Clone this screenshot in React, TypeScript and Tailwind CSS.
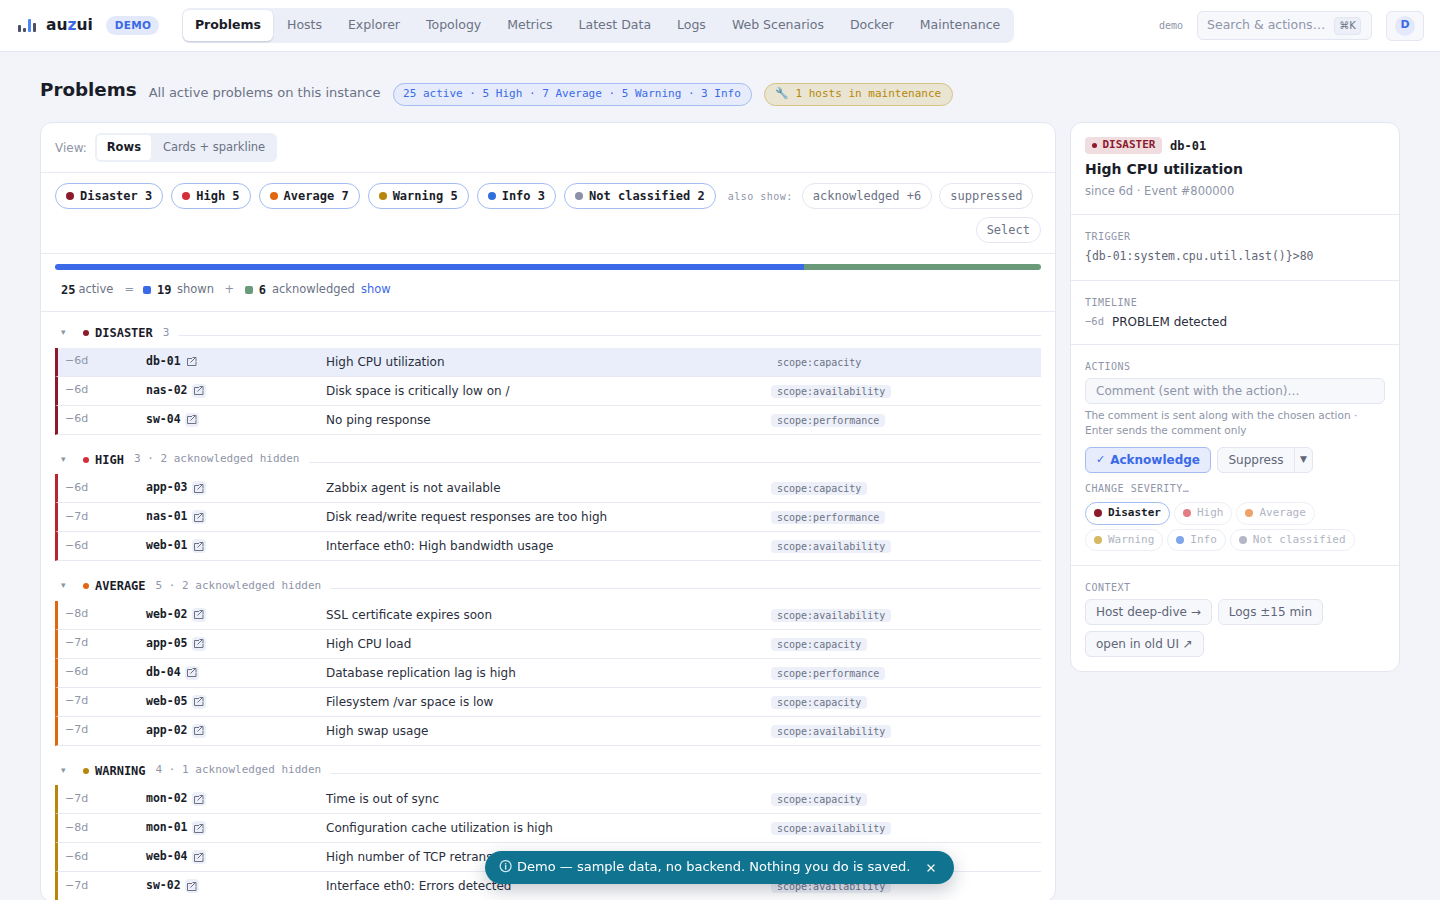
import { X } from "lucide-react";

const mono = "[font-family:'DejaVu_Sans_Mono',monospace]";

const navItems = ["Hosts", "Explorer", "Topology", "Metrics", "Latest Data", "Logs", "Web Scenarios", "Docker", "Maintenance"];

const filters = [
  { label: "Disaster 3", color: "bg-[#8b1a2b]" },
  { label: "High 5", color: "bg-[#d32f3a]" },
  { label: "Average 7", color: "bg-[#e0660f]" },
  { label: "Warning 5", color: "bg-[#b8860b]" },
  { label: "Info 3", color: "bg-[#2f6fdc]" },
  { label: "Not classified 2", color: "bg-[#8a90a6]" },
];

const groups = [
  {
    name: "DISASTER",
    note: "3",
    dot: "bg-[#8b1a2b]",
    bar: "border-l-[#8b1a2b]",
    rows: [
      ["−6d", "db-01", "High CPU utilization", "scope:capacity"],
      ["−6d", "nas-02", "Disk space is critically low on /", "scope:availability"],
      ["−6d", "sw-04", "No ping response", "scope:performance"],
    ],
  },
  {
    name: "HIGH",
    note: "3 · 2 acknowledged hidden",
    dot: "bg-[#d32f3a]",
    bar: "border-l-[#b9252f]",
    rows: [
      ["−6d", "app-03", "Zabbix agent is not available", "scope:capacity"],
      ["−7d", "nas-01", "Disk read/write request responses are too high", "scope:performance"],
      ["−6d", "web-01", "Interface eth0: High bandwidth usage", "scope:availability"],
    ],
  },
  {
    name: "AVERAGE",
    note: "5 · 2 acknowledged hidden",
    dot: "bg-[#e0660f]",
    bar: "border-l-[#e0660f]",
    rows: [
      ["−8d", "web-02", "SSL certificate expires soon", "scope:availability"],
      ["−7d", "app-05", "High CPU load", "scope:capacity"],
      ["−6d", "db-04", "Database replication lag is high", "scope:performance"],
      ["−7d", "web-05", "Filesystem /var space is low", "scope:capacity"],
      ["−7d", "app-02", "High swap usage", "scope:availability"],
    ],
  },
  {
    name: "WARNING",
    note: "4 · 1 acknowledged hidden",
    dot: "bg-[#b8860b]",
    bar: "border-l-[#b8860b]",
    rows: [
      ["−7d", "mon-02", "Time is out of sync", "scope:capacity"],
      ["−8d", "mon-01", "Configuration cache utilization is high", "scope:availability"],
      ["−6d", "web-04", "High number of TCP retransmissions", "scope:capacity"],
      ["−7d", "sw-02", "Interface eth0: Errors detected", "scope:availability"],
    ],
  },
];

const severities = [
  { label: "Disaster", color: "bg-[#8b1a2b]", on: true },
  { label: "High", color: "bg-[#e27c84]" },
  { label: "Average", color: "bg-[#eca368]" },
  { label: "Warning", color: "bg-[#d6b962]" },
  { label: "Info", color: "bg-[#7ea6e8]" },
  { label: "Not classified", color: "bg-[#b4b8c6]" },
];

function ExternalIcon() {
  return (
    <svg width="10" height="9" viewBox="0 0 10 9" fill="none" stroke="#6b7285" strokeWidth="1">
      <path d="M9 4.5v4H.5v-7h4.5" />
      <path d="M3.5 5.5 8 1M5.5.5h3.5V4" />
    </svg>
  );
}

function Logo() {
  return (
    <svg width="18" height="13" viewBox="0 0 18 13" className="shrink-0">
      <rect x="0" y="6" width="3" height="7" rx="1" fill="#4a5068" />
      <rect x="5" y="9" width="3" height="4" rx="1" fill="#4a5068" />
      <rect x="10" y="0" width="3" height="13" rx="1" fill="#4f86f7" />
      <rect x="15" y="4" width="3" height="9" rx="1" fill="#4a5068" />
    </svg>
  );
}

function Header() {
  return (
    <header className="h-[52px] shrink-0 bg-white border-b border-[#e3e6f0] flex items-center pl-[18px] pr-4">
      <Logo />
      <span className="ml-[10px] text-[15.5px] font-bold text-[#1a1d29]">
        au<span className="text-[#3b6ae8]">z</span>ui
      </span>
      <span className="ml-[13.5px] h-[19px] w-[53px] rounded-full bg-[#e3e9fb] text-[#3b6ae8] text-[10.5px] font-bold flex items-center justify-center tracking-[0.3px]">
        DEMO
      </span>
      <nav className="ml-[22.5px] h-[35px] w-[832px] bg-[#eceff7] rounded-lg flex items-center gap-0.5 px-px">
        <span className="h-[31px] px-3 rounded-md bg-white shadow-[0_1px_2px_rgba(30,40,80,0.2)] text-[12.5px] font-bold text-[#1a1d29] flex items-center">
          Problems
        </span>
        {navItems.map((n) => (
          <span key={n} className="px-3 text-[12.5px] text-[#6b7285] whitespace-nowrap">
            {n}
          </span>
        ))}
      </nav>
      <span className={`ml-auto ${mono} text-[10px] text-[#8f95a8]`}>demo</span>
      <div className="ml-[14px] w-[175px] h-[29px] rounded-md bg-[#f7f8fc] border border-[#e3e6f0] flex items-center justify-between pl-[9px] pr-[10px]">
        <span className="text-[12.5px] text-[#8f95a8] whitespace-nowrap">Search &amp; actions…</span>
        <span className="h-[18px] w-[27px] rounded bg-[#eceff7] border border-[#e3e6f0] text-[10px] text-[#6b7285] flex items-center justify-center">
          ⌘K
        </span>
      </div>
      <div className="ml-[14px] w-[38px] h-[30px] rounded-md bg-[#f7f8fc] border border-[#e3e6f0] flex items-center justify-center">
        <span className="w-5 h-5 rounded-full bg-[#e3e9fb] text-[#3b6ae8] text-[11px] font-bold flex items-center justify-center">
          D
        </span>
      </div>
    </header>
  );
}

function ProblemRow({ row, bar, selected }: { row: string[]; bar: string; selected: boolean }) {
  return (
    <div
      className={`h-[29px] border-l-[3px] ${bar} border-b border-b-[#e8eaf3] pl-2 grid grid-cols-[80px_180px_445px_1fr] items-center ${
        selected ? "bg-[#e9eefa]" : "bg-white"
      }`}
    >
      <span className="text-[11px] text-[#8f95a8] -ml-px">{row[0]}</span>
      <span className="flex items-center gap-[4px]">
        <span className={`${mono} text-[11.5px] font-bold text-[#1a1d29]`}>{row[1]}</span>
        <span className={`w-[14px] h-[14px] rounded flex items-center justify-center ${selected ? "" : "bg-[#eceff7]"}`}>
          <ExternalIcon />
        </span>
      </span>
      <span className="text-[12px] text-[#2a2e3c]">{row[2]}</span>
      <span className="-mt-[2px]">
        <span className={`${mono} inline-flex items-center h-[13px] px-[6px] rounded text-[10px] text-[#6b7285] ${selected ? "" : "bg-[#edf0f8]"}`}>
          {row[3]}
        </span>
      </span>
    </div>
  );
}

function ProblemList() {
  return (
    <section className="w-[1016px] shrink-0 bg-white border border-[#e3e6f0] rounded-xl overflow-hidden">
      <div className="h-[50px] border-b border-[#e8eaf3] px-[14px] flex items-center gap-2">
        <span className="text-[12px] text-[#8f95a8]">View:</span>
        <div className="h-[29px] w-[182px] rounded-md bg-[#eceff7] flex items-center p-0.5">
          <span className="h-[25px] w-[54px] rounded bg-white text-[11.5px] font-bold text-[#1a1d29] flex items-center justify-center">
            Rows
          </span>
          <span className="ml-3 text-[11.5px] text-[#6b7285]">Cards + sparkline</span>
        </div>
      </div>

      <div className="h-[81px] border-b border-[#e8eaf3] px-[14px] pt-[10px] flex flex-wrap gap-x-2 gap-y-2 content-start items-center">
        {filters.map((f) => (
          <span
            key={f.label}
            className={`${mono} h-[26px] px-[10px] rounded-full border border-[#a3bcf2] text-[12px] font-bold text-[#1a1d29] flex items-center gap-[6px]`}
          >
            <span className={`w-2 h-2 rounded-full ${f.color}`} />
            {f.label}
          </span>
        ))}
        <span className={`${mono} ml-1 mr-px text-[10px] tracking-[0.5px] text-[#8f95a8]`}>also show:</span>
        <span className={`${mono} h-[26px] px-[10px] rounded-full border border-[#e3e6f0] text-[12px] text-[#6b7285] flex items-center`}>
          acknowledged +6
        </span>
        <span className={`${mono} -ml-px h-[26px] px-[10px] rounded-full border border-[#e3e6f0] text-[12px] text-[#6b7285] flex items-center`}>
          suppressed
        </span>
        <span className={`${mono} ml-auto h-[26px] px-[10px] rounded-full border border-[#e3e6f0] text-[12px] text-[#6b7285] flex items-center`}>
          Select
        </span>
      </div>

      <div className="h-[58px] border-b border-[#e8eaf3] px-[14px] pt-[10px]">
        <div className="h-1.5 rounded-full overflow-hidden flex">
          <div className="w-[749px] bg-[#3b6ae8]" />
          <div className="flex-1 bg-[#6b9a7b]" />
        </div>
        <div className="mt-[10.5px] pl-[6px] flex items-center text-[11.5px] text-[#6b7285]">
          <span className={`${mono} text-[12px] font-bold text-[#1a1d29]`}>25</span>
          <span className="ml-[3px]">active</span>
          <span className="ml-[11px] text-[#8f95a8]">=</span>
          <span className="ml-[9px] w-2 h-2 rounded-[2px] bg-[#3b6ae8]" />
          <span className={`${mono} ml-[6px] text-[12px] font-bold text-[#1a1d29]`}>19</span>
          <span className="ml-[5.5px]">shown</span>
          <span className="ml-[10.5px] text-[#8f95a8]">+</span>
          <span className="ml-[10.5px] w-2 h-2 rounded-[2px] bg-[#6b9a7b]" />
          <span className={`${mono} ml-[6px] text-[12px] font-bold text-[#1a1d29]`}>6</span>
          <span className="ml-[6px]">acknowledged</span>
          <span className="ml-[6px] text-[#3b6ae8]">show</span>
        </div>
      </div>

      <div className="px-[14px] pt-[13px]">
        {groups.map((g, gi) => (
          <div key={g.name}>
            <div className={`h-4 flex items-center ${gi > 0 ? "mt-[17px] mb-[6.5px]" : "mb-[6.6px]"}`}>
              <span className="w-[28px] pl-[6px] text-[9px] text-[#8f95a8]">▾</span>
              <span className={`w-[6px] h-[6px] rounded-full ${g.dot}`} />
              <span className={`${mono} ml-[6px] text-[12px] font-bold text-[#1a1d29]`}>{g.name}</span>
              <span className={`${mono} ml-[10px] text-[11px] text-[#8f95a8]`}>{g.note}</span>
              <span className="ml-[10px] flex-1 h-px mt-[5px] bg-[#e8eaf3]" />
            </div>
            {g.rows.map((r) => (
              <ProblemRow key={r[1]} row={r} bar={g.bar} selected={r[1] === "db-01"} />
            ))}
          </div>
        ))}
      </div>
    </section>
  );
}

function Label({ children }: { children: string }) {
  return <div className={`${mono} text-[10px] tracking-[0.5px] leading-[14px] text-[#8f95a8]`}>{children}</div>;
}

function DetailPanel() {
  return (
    <aside className="w-[330px] h-[550px] shrink-0 bg-white border border-[#e3e6f0] rounded-xl overflow-hidden">
      <div className="h-[92px] border-b border-[#e8eaf3] px-[14px] pt-[13.5px]">
        <div className="flex items-center gap-2">
          <span className={`${mono} h-[17px] w-[77px] rounded bg-[#f0dde0] text-[#8b1a2b] text-[11px] font-bold flex items-center justify-center gap-[6px]`}>
            <span className="w-[5px] h-[5px] rounded-full bg-[#8b1a2b]" />
            DISASTER
          </span>
          <span className={`${mono} text-[12px] font-bold text-[#1a1d29]`}>db-01</span>
        </div>
        <div className="mt-[4.5px] text-[14px] leading-[20px] font-bold text-[#1a1d29]">High CPU utilization</div>
        <div className="mt-[4px] text-[11.5px] leading-[16px] text-[#8f95a8]">since 6d · Event #800000</div>
      </div>

      <div className="h-[66px] border-b border-[#e8eaf3] px-[14px] pt-[15px]">
        <Label>TRIGGER</Label>
        <div className={`${mono} mt-1 text-[11.5px] leading-[16px] text-[#5f6678]`}>
          {"{db-01:system.cpu.util.last()}>80"}
        </div>
      </div>

      <div className="h-[64px] border-b border-[#e8eaf3] px-[14px] pt-[15px]">
        <Label>TIMELINE</Label>
        <div className="mt-1 flex items-center gap-2">
          <span className={`${mono} text-[10.5px] text-[#8f95a8]`}>−6d</span>
          <span className="text-[12px] leading-[16px] text-[#2a2e3c]">PROBLEM detected</span>
        </div>
      </div>

      <div className="h-[221px] border-b border-[#e8eaf3] px-[14px] pt-[15px]">
        <Label>ACTIONS</Label>
        <div className="mt-[4px] h-[26px] rounded-md bg-[#f7f8fc] border border-[#e3e6f0] flex items-center px-[10px] text-[12px] text-[#8f95a8]">
          Comment (sent with the action)…
        </div>
        <p className="mt-[4px] text-[10.5px] leading-[15px] text-[#8f95a8]">
          The comment is sent along with the chosen action · Enter sends the comment only
        </p>
        <div className="mt-[9px] flex gap-[6px]">
          <span className="h-[26px] w-[126px] rounded-md bg-[#e6ecfb] border border-[#a3bcf2] text-[#3b6ae8] text-[12px] font-bold flex items-center justify-center gap-[5px]">
            <span className="text-[11px] font-normal">✓</span>Acknowledge
          </span>
          <span className="h-[26px] w-[96px] rounded-md bg-[#f7f8fc] border border-[#e3e6f0] flex items-center text-[#5f6678]">
            <span className="w-[76px] text-center text-[12px]">Suppress</span>
            <span className="flex-1 h-full border-l border-[#e3e6f0] flex items-center justify-center text-[9px]">▼</span>
          </span>
        </div>
        <div className="mt-[9px]">
          <Label>CHANGE SEVERITY…</Label>
        </div>
        <div className="mt-[6px] flex flex-wrap gap-x-1 gap-y-1">
          {severities.map((s) => (
            <span
              key={s.label}
              className={`${mono} h-[22.5px] px-2 rounded-full border text-[11px] flex items-center gap-[6px] ${
                s.on ? "border-[#a3bcf2] font-bold text-[#1a1d29]" : "border-[#eceef5] text-[#b0b4c3]"
              }`}
            >
              <span className={`w-2 h-2 rounded-full ${s.color}`} />
              {s.label}
            </span>
          ))}
        </div>
      </div>

      <div className="px-[14px] pt-[15px]">
        <Label>CONTEXT</Label>
        <div className="mt-[4px] flex flex-wrap gap-x-[6px] gap-y-[6px]">
          {["Host deep-dive →", "Logs ±15 min", "open in old UI ↗"].map((c) => (
            <span key={c} className="h-[26px] px-[10px] rounded-md bg-[#f7f8fc] border border-[#e3e6f0] text-[12px] text-[#5f6678] flex items-center">
              {c}
            </span>
          ))}
        </div>
      </div>
    </aside>
  );
}

export default function App() {
  return (
    <div className="h-screen overflow-hidden flex flex-col bg-[#f2f4fa] [font-family:'DejaVu_Sans',sans-serif]">
      <Header />
      <main className="px-10 flex-1 min-h-0">
        <div className="h-[70px] pt-[14px] flex items-center gap-3">
          <h1 className="text-[18.3px] font-bold text-[#1a1d29] -mt-[8px]">Problems</h1>
          <span className="text-[13px] text-[#6b7285] -mt-[2px]">All active problems on this instance</span>
          <span className={`${mono} h-[23px] w-[359px] rounded-full bg-[#e6ecfb] border border-[#a3bcf2] text-[#3b6ae8] text-[11px] flex items-center justify-center`}>
            25 active · 5 High · 7 Average · 5 Warning · 3 Info
          </span>
          <span className={`${mono} h-[23px] w-[189px] rounded-full bg-[#e9e5d2] border border-[#d6c383] text-[#b8860b] text-[11px] flex items-center justify-center gap-[6px]`}>
            🔧 1 hosts in maintenance
          </span>
        </div>
        <div className="flex items-start gap-[14px]">
          <ProblemList />
          <DetailPanel />
        </div>
      </main>
      <div className="fixed left-[485px] top-[851px] w-[469px] h-[33px] rounded-full bg-[#107491] text-white text-[13px] flex items-center pl-[14px] shadow-[0_6px_18px_rgba(20,30,60,0.25)]">
        <span className="text-[#d6ecf3] -mt-px">🛈</span>
        <span className="ml-[5px] whitespace-nowrap -mt-px">Demo — sample data, no backend. Nothing you do is saved.</span>
        <X size={12} strokeWidth={2.5} className="ml-[15px]" />
      </div>
    </div>
  );
}
